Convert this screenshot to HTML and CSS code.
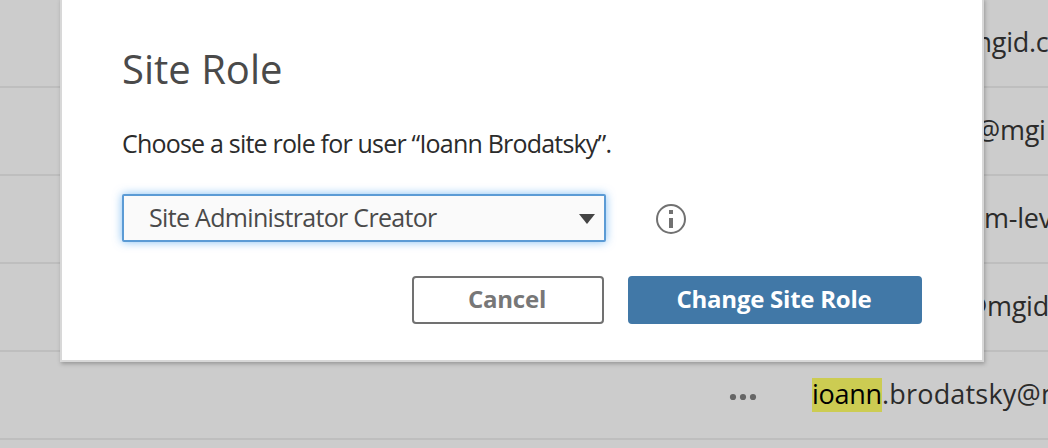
FILE: index.html
```html
<!DOCTYPE html>
<html lang="en">
<head>
  <meta charset="UTF-8" />
  <meta name="viewport" content="width=device-width, initial-scale=1.0" />
  <title>Site Role</title>
  <link rel="stylesheet" href="styles.css">
</head>
<body>
  <div class="users">
    <div class="row"><span class="email email-1">mgid.c</span></div>
    <div class="row"><span class="email email-2">@mgi</span></div>
    <div class="row"><span class="email email-3">m-lev</span></div>
    <div class="row"><span class="email email-4">@mgid</span></div>
    <div class="row">
      <svg class="more" width="28" height="8" viewBox="0 0 28 8">
        <circle cx="4" cy="4" r="3.1" />
        <circle cx="14" cy="4" r="3.1" />
        <circle cx="24" cy="4" r="3.1" />
      </svg>
      <span class="email email-5"><mark>ioann</mark>.brodatsky@m</span>
    </div>
    <div class="row"></div>
  </div>

  <div class="dialog" role="dialog">
    <h1>Site Role</h1>
    <p>Choose a site role for user “Ioann Brodatsky”.</p>
    <div class="field">
      <div class="select" tabindex="0">
        <span class="value">Site Administrator Creator</span>
        <svg width="16" height="10" viewBox="0 0 16 10"><path d="M0 0h16L8 10z" /></svg>
      </div>
      <svg class="info" width="30" height="30" viewBox="0 0 30 30">
        <circle cx="15" cy="15" r="14" />
        <path d="M13 6h4v4h-4zM13 14h4v10h-4z" />
      </svg>
    </div>
    <div class="actions">
      <button class="cancel">Cancel</button>
      <button class="primary">Change Site Role</button>
    </div>
  </div>
</body>
</html>
```

FILE: styles.css
```css
* {
  box-sizing: border-box;
}

body {
  margin: 0;
  height: 448px;
  overflow: hidden;
  position: relative;
  background: #ccc;
  color: #2b2b2b;
  font-family: 'Open Sans', sans-serif;
  font-size: 25px;
}

.users {
  height: 448px;
  overflow: hidden;
}

.row {
  display: flex;
  align-items: center;
  height: 88px;
  padding-bottom: 2px;
  border-bottom: 2px solid #bebebe;
  white-space: nowrap;
}

.email {
  font-size: 27px;
  line-height: 34px;
  letter-spacing: -0.25px;
}

.email-1 { margin-left: 967px; }
.email-2 { margin-left: 976px; }
.email-3 { margin-left: 984px; }
.email-4 { margin-left: 963px; }
.email-5 { letter-spacing: 0.2px; }

.more {
  flex: none;
  margin: 6px 55px 0 729px;
  fill: #666;
}

mark {
  display: inline-block;
  height: 34px;
  background: linear-gradient(transparent 1px, #cccc52 1px);
  box-shadow: 0 1px #cccc52;
  color: #000;
  letter-spacing: -0.25px;
}

/* dialog lies over the user list */
.dialog {
  position: absolute;
  top: -2px;
  left: 60px;
  width: 924px;
  height: 364px;
  padding: 0 60px;
  border: 2px solid #d8d8d8;
  background: #fff;
  background-clip: padding-box;
  box-shadow: 1px 2px 4px rgba(0, 0, 0, 0.25);
}

h1 {
  margin: 41px 0 0;
  font-size: 40px;
  font-weight: 400;
  line-height: 56px;
  color: #4a4a4a;
}

p {
  margin: 29px 0 0;
  line-height: 34px;
  letter-spacing: -0.8px;
}

.field {
  display: flex;
  align-items: center;
  gap: 50px;
  margin-top: 34px;
}

.select {
  display: flex;
  align-items: center;
  justify-content: space-between;
  width: 484px;
  height: 48px;
  padding: 0 9px 0 25px;
  border: 2px solid #5b9bd5;
  border-radius: 2px;
  background: #fafafa;
  box-shadow: 0 0 10px rgba(91, 170, 240, 0.75);
  color: #4a4a4a;
  letter-spacing: -0.68px;
  fill: #444;
}

.value {
  margin-top: -2px;
}

.select svg {
  margin-top: 2px;
}

.info {
  margin-top: 2px;
  fill: #717171;
}

.info circle {
  fill: none;
  stroke: #717171;
  stroke-width: 2;
}

.actions {
  display: flex;
  justify-content: flex-end;
  gap: 24px;
  margin-top: 34px;
}

button {
  height: 48px;
  padding: 0 2px 2px 0;
  border: 2px solid #717171;
  border-radius: 4px;
  background: #fff;
  color: #777;
  font: 700 24px/34px 'Open Sans', sans-serif;
  letter-spacing: -0.25px;
}

.cancel {
  width: 192px;
}

.primary {
  width: 294px;
  border-color: #4178a7;
  background: #4178a7;
  color: #fff;
}
```
